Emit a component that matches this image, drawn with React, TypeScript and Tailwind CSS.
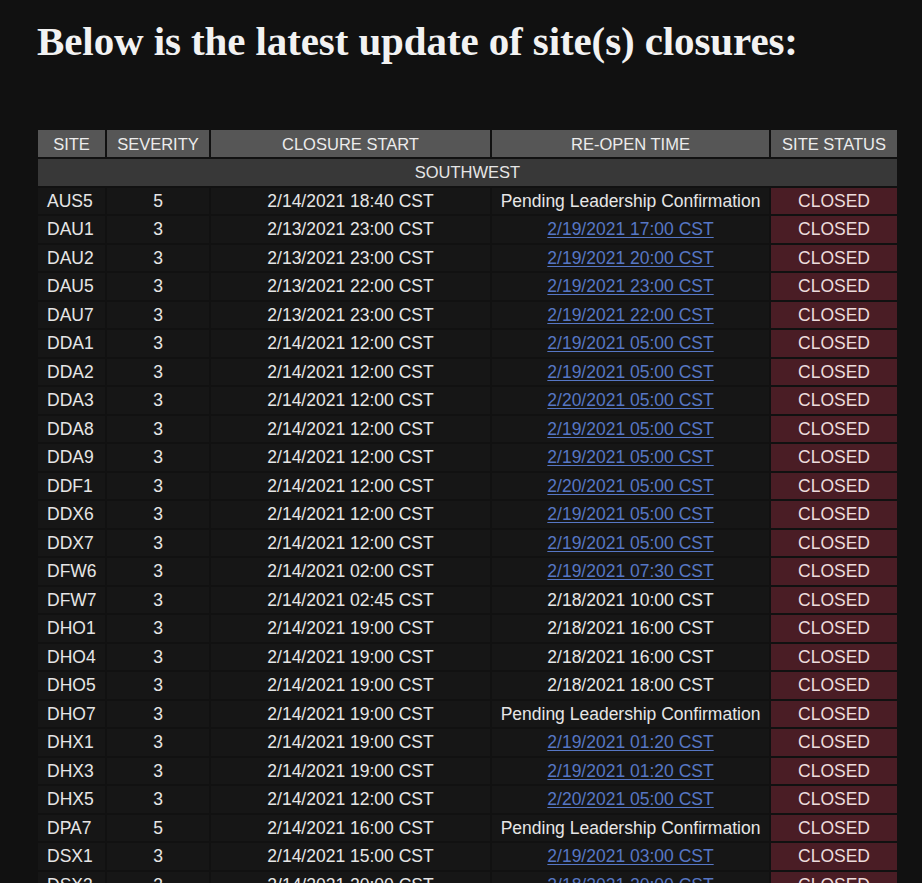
const rows: [string, string, string, string, "link" | "plain" | "pending"][] = [
  ["AUS5", "5", "2/14/2021 18:40 CST", "Pending Leadership Confirmation", "pending"],
  ["DAU1", "3", "2/13/2021 23:00 CST", "2/19/2021 17:00 CST", "link"],
  ["DAU2", "3", "2/13/2021 23:00 CST", "2/19/2021 20:00 CST", "link"],
  ["DAU5", "3", "2/13/2021 22:00 CST", "2/19/2021 23:00 CST", "link"],
  ["DAU7", "3", "2/13/2021 23:00 CST", "2/19/2021 22:00 CST", "link"],
  ["DDA1", "3", "2/14/2021 12:00 CST", "2/19/2021 05:00 CST", "link"],
  ["DDA2", "3", "2/14/2021 12:00 CST", "2/19/2021 05:00 CST", "link"],
  ["DDA3", "3", "2/14/2021 12:00 CST", "2/20/2021 05:00 CST", "link"],
  ["DDA8", "3", "2/14/2021 12:00 CST", "2/19/2021 05:00 CST", "link"],
  ["DDA9", "3", "2/14/2021 12:00 CST", "2/19/2021 05:00 CST", "link"],
  ["DDF1", "3", "2/14/2021 12:00 CST", "2/20/2021 05:00 CST", "link"],
  ["DDX6", "3", "2/14/2021 12:00 CST", "2/19/2021 05:00 CST", "link"],
  ["DDX7", "3", "2/14/2021 12:00 CST", "2/19/2021 05:00 CST", "link"],
  ["DFW6", "3", "2/14/2021 02:00 CST", "2/19/2021 07:30 CST", "link"],
  ["DFW7", "3", "2/14/2021 02:45 CST", "2/18/2021 10:00 CST", "plain"],
  ["DHO1", "3", "2/14/2021 19:00 CST", "2/18/2021 16:00 CST", "plain"],
  ["DHO4", "3", "2/14/2021 19:00 CST", "2/18/2021 16:00 CST", "plain"],
  ["DHO5", "3", "2/14/2021 19:00 CST", "2/18/2021 18:00 CST", "plain"],
  ["DHO7", "3", "2/14/2021 19:00 CST", "Pending Leadership Confirmation", "pending"],
  ["DHX1", "3", "2/14/2021 19:00 CST", "2/19/2021 01:20 CST", "link"],
  ["DHX3", "3", "2/14/2021 19:00 CST", "2/19/2021 01:20 CST", "link"],
  ["DHX5", "3", "2/14/2021 12:00 CST", "2/20/2021 05:00 CST", "link"],
  ["DPA7", "5", "2/14/2021 16:00 CST", "Pending Leadership Confirmation", "pending"],
  ["DSX1", "3", "2/14/2021 15:00 CST", "2/19/2021 03:00 CST", "link"],
  ["DSX3", "3", "2/14/2021 20:00 CST", "2/18/2021 20:00 CST", "link"],
];

export default function App() {
  return (
    <div className="min-h-screen h-[883px] overflow-hidden bg-[#111111] pl-[36px] font-['Liberation_Sans',Arial,sans-serif] text-[#e6e6e6]">
      <h1 className="pt-[20px] h-[62px] pl-[1px] font-['Liberation_Serif','Times_New_Roman',serif] text-[41px] leading-[42px] tracking-[-0.1px] font-bold text-[#f2f2f2]">
        Below is the latest update of site(s) closures:
      </h1>
      <table className="mt-[66px] border-separate border-spacing-[2px] text-[17.5px] leading-[26px]">
        <thead>
          <tr className="bg-[#565656] text-[16.5px] text-[#ececec]">
            <th className="w-[67px] h-[27px] p-0 font-normal">SITE</th>
            <th className="w-[102px] p-0 font-normal">SEVERITY</th>
            <th className="w-[279px] p-0 font-normal">CLOSURE START</th>
            <th className="w-[277px] p-0 font-normal">RE-OPEN TIME</th>
            <th className="w-[126px] p-0 font-normal">SITE STATUS</th>
          </tr>
        </thead>
        <tbody>
          <tr>
            <td colSpan={5} className="h-[26.5px] p-0 bg-[#383838] text-center text-[16.5px]">
              SOUTHWEST
            </td>
          </tr>
          {rows.map(([site, sev, start, reopen, kind]) => (
            <tr key={site} className="bg-[#161616]">
              <td className="h-[26.5px] p-0 pl-[9px]">{site}</td>
              <td className="p-0 text-center">{sev}</td>
              <td className="p-0 text-center">{start}</td>
              <td className="p-0 text-center">
                {kind === "link" ? (
                  <a className="text-[#5676c4] underline underline-offset-2">{reopen}</a>
                ) : (
                  reopen
                )}
              </td>
              <td className="p-0 text-center bg-[#4a1d25] text-[#eddcdc]">CLOSED</td>
            </tr>
          ))}
        </tbody>
      </table>
    </div>
  );
}
